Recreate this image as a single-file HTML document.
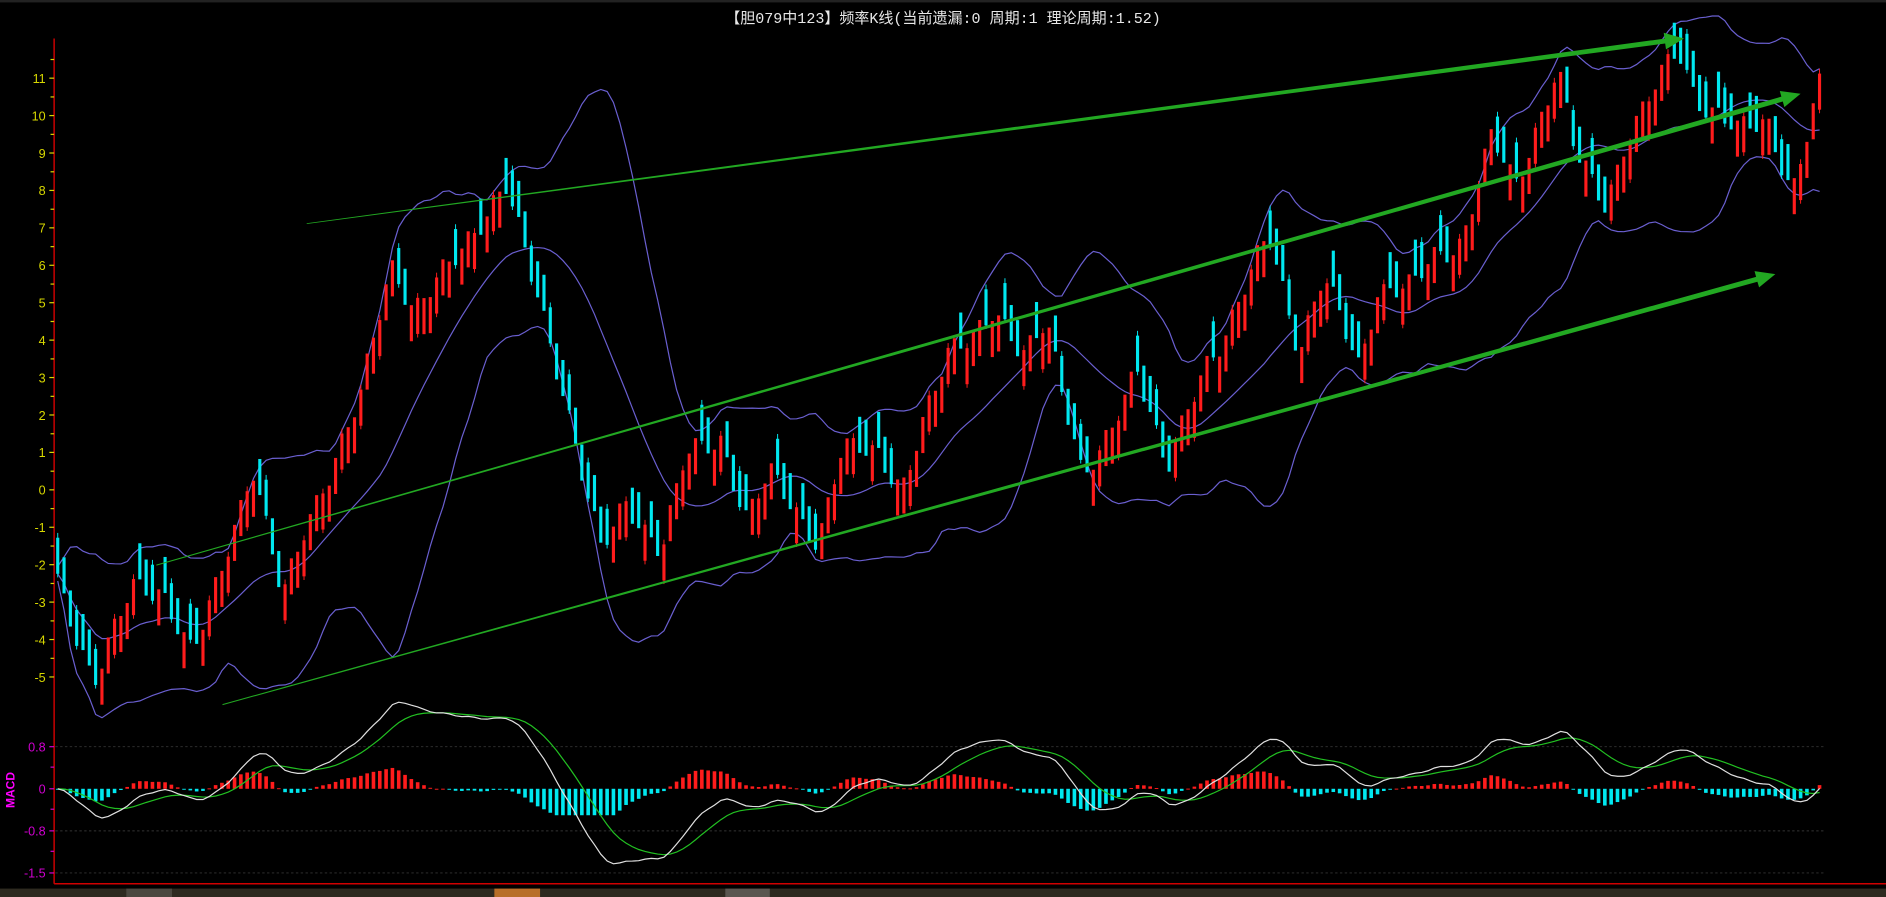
<!DOCTYPE html>
<html><head><meta charset="utf-8">
<style>
html,body{margin:0;padding:0;background:#000;overflow:hidden}
svg{display:block}
</style></head>
<body>
<svg id="s" width="1886" height="897" viewBox="0 0 1568 746" preserveAspectRatio="none" xmlns="http://www.w3.org/2000/svg">
<rect x="0" y="0" width="1568" height="746" fill="#000"/>
<rect x="0" y="0" width="1568" height="2" fill="#222"/>
<text x="784" y="19" fill="#e8e8e8" font-size="12.5" text-anchor="middle" font-family="Liberation Mono, Noto Sans CJK SC, monospace">【胆079中123】频率K线(当前遗漏:0 周期:1 理论周期:1.52)</text>
<g id="axis" font-family="Liberation Sans, sans-serif" font-size="10.5">
<line x1="45" y1="32" x2="45" y2="735" stroke="#d00000" stroke-width="1.2"/>
<line x1="45" y1="735" x2="1568" y2="735" stroke="#d00000" stroke-width="1.2"/>
</g>
<g id="grid"></g>
<g id="bands"></g>
<g id="candles"></g>
<g id="arrows"></g>
<g id="macd"></g>
<text transform="translate(12,657) rotate(-90)" fill="#ff00ff" font-size="10" font-weight="bold" text-anchor="middle" font-family="Liberation Sans, sans-serif">MACD</text>
<rect x="0" y="739" width="1568" height="7" fill="#2e2a20"/>
<rect x="105" y="739" width="38" height="7" fill="#4b4840"/>
<rect x="411" y="739" width="38" height="7" fill="#b86e28"/>
<rect x="603" y="739" width="37" height="7" fill="#5a5650"/>
</svg>
<script>
(function(){
var NS="http://www.w3.org/2000/svg";
function el(p,t,a){var e=document.createElementNS(NS,t);for(var k in a)e.setAttribute(k,a[k]);document.getElementById(p).appendChild(e);return e;}
var ax="axis";
for(var v=-5;v<=11;v++){var y=65+(11-v)*31.125;
 var t=el(ax,"text",{x:38,y:y+4,fill:"#d8d800","text-anchor":"end"});t.textContent=(v<0?"-"+(-v):v);
 el(ax,"line",{x1:41,y1:y,x2:45,y2:y,stroke:"#d8d800","stroke-width":1});
 el(ax,"line",{x1:42,y1:y-15.5,x2:45,y2:y-15.5,stroke:"#d8d800","stroke-width":1});
}
var ml=[[0.8,621],[0,656],[-0.8,691],[-1.5,726]];
ml.forEach(function(m){var t=el(ax,"text",{x:38,y:m[1]+4,fill:"#d000d0","text-anchor":"end"});t.textContent=(m[0]==0?"0":m[0]<0?"-"+(-m[0]).toFixed(1):m[0].toFixed(1));
 el(ax,"line",{x1:41,y1:m[1],x2:45,y2:m[1],stroke:"#d000d0"});
 if(m[0]!=0)el("grid","line",{x1:46,y1:m[1],x2:1517,y2:m[1],stroke:"#333","stroke-width":0.8,"stroke-dasharray":"2,2"});
});
[638,673,708].forEach(function(y){el(ax,"line",{x1:42,y1:y,x2:45,y2:y,stroke:"#d000d0"});});
var K=[[48,485],[78,565],[110,490],[135,490],[160,545],[175,505],[210,385],[235,500],[255,435],[300,330],[325,220],[345,255],[380,215],[420,150],[440,225],[470,330],[500,460],[520,420],[550,455],[570,380],[600,365],[620,430],[640,395],[680,450],[700,375],[730,375],[750,405],[790,290],[825,260],[850,300],[870,260],[900,400],[915,380],[945,300],[970,395],[1000,305],[1020,275],[1055,195],[1080,290],[1100,230],[1130,305],[1145,240],[1175,240],[1190,215],[1215,200],[1240,115],[1260,155],[1295,55],[1310,130],[1335,170],[1350,120],[1395,40],[1410,80],[1445,110],[1470,100],[1490,160],[1515,65]];
function ip(x){for(var i=0;i<K.length-1;i++){if(x<=K[i+1][0]){var a=K[i],b=K[i+1],f=(x-a[0])/(b[0]-a[0]);return a[1]+(b[1]-a[1])*f;}}return K[K.length-1][1];}
var xs=[],ps=[];
for(var x=48;x<=1515;x+=5.25){xs.push(x);ps.push(ip(x)+8*Math.sin(x*0.9)+5*Math.sin(x*2.3));}
var prev=ps[0];
for(var i=0;i<ps.length;i++){var p=ps[i],isUp=p<prev||(i>0&&Math.abs(p-prev)<2&&i%2==0);
 var cTop,cBot;if(isUp){cTop=p;cBot=p+30;}else{cTop=p-30;cBot=p;}
 var c=isUp?"#ff1c1c":"#00e8f0";
 el("candles","rect",{x:xs[i]-1.3,y:cTop,width:2.6,height:cBot-cTop,fill:c});
 if(i%3==0)el("candles","line",{x1:xs[i],y1:cTop-4,x2:xs[i],y2:cBot+3,stroke:c,"stroke-width":0.8});
 prev=p;}
var mid=[],ub=[],lb=[];var N=20;
for(var i=0;i<ps.length;i++){var s=0,n=0;for(var j=Math.max(0,i-N+1);j<=i;j++){s+=ps[j];n++;}var m=s/n;var q=0;for(var j=Math.max(0,i-N+1);j<=i;j++)q+=(ps[j]-m)*(ps[j]-m);var sd=Math.sqrt(q/n);
 mid.push([xs[i],m]);ub.push([xs[i],m-2*sd-6]);lb.push([xs[i],m+2*sd+6]);}
[mid,ub,lb].forEach(function(a){el("bands","polyline",{points:a.map(function(q){return q[0].toFixed(1)+","+q[1].toFixed(1)}).join(" "),fill:"none",stroke:"#6a5fd0","stroke-width":1});});
function arrow(x1,y1,x2,y2,w1,w2){var dx=x2-x1,dy=y2-y1,L=Math.sqrt(dx*dx+dy*dy),ux=dx/L,uy=dy/L,nx=-uy,ny=ux;var hl=16,hw=7;
 var bx=x2-ux*hl,by=y2-uy*hl;
 var pts=[[x1+nx*w1/2,y1+ny*w1/2],[bx+nx*w2/2,by+ny*w2/2],[bx+nx*hw,by+ny*hw],[x2,y2],[bx-nx*hw,by-ny*hw],[bx-nx*w2/2,by-ny*w2/2],[x1-nx*w1/2,y1-ny*w1/2]];
 el("arrows","polygon",{points:pts.map(function(q){return q[0].toFixed(1)+","+q[1].toFixed(1)}).join(" "),fill:"#22a822"});}
arrow(255,186,1400,32,0.6,4.2);
arrow(130,470,1497,78,0.8,4.2);
arrow(185,586,1476,228,0.8,4.2);
function ema(a,n){var kk=2/(n+1),r=[a[0]];for(var i=1;i<a.length;i++)r.push(a[i]*kk+r[i-1]*(1-kk));return r;}
var vv=ps.map(function(p){return -p;});
var e12=ema(vv,12),e26=ema(vv,26),dif=e12.map(function(a,i){return a-e26[i];}),dea=ema(dif,9);
var mx=0;dif.forEach(function(d,i){if(i>5)mx=Math.max(mx,Math.abs(d));});var sc=72/mx;
for(var i=0;i<dif.length;i++){var h=(dif[i]-dea[i])*sc*0.9;h=Math.max(-22,Math.min(22,h));
 el("macd","rect",{x:xs[i]-1.5,y:h>0?656-h:656,width:3,height:Math.max(0.8,Math.abs(h)),fill:h>0?"#ff1c1c":"#00e8f0"});}
el("macd","polyline",{points:dea.map(function(d,i){return xs[i].toFixed(1)+","+(656-d*sc).toFixed(1)}).join(" "),fill:"none",stroke:"#22c022","stroke-width":1});
el("macd","polyline",{points:dif.map(function(d,i){return xs[i].toFixed(1)+","+(656-d*sc).toFixed(1)}).join(" "),fill:"none",stroke:"#e0e0e0","stroke-width":1});
})();
</script>
</body></html>
